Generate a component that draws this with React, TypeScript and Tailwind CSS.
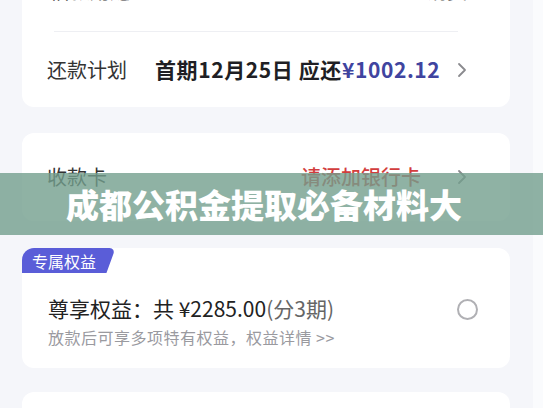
import React from 'react';

const font = { fontFamily: '"Noto Sans CJK SC", "Noto Sans", sans-serif' };

function Chevron() {
  return (
    <svg width="10" height="16" viewBox="0 0 10 16" className="shrink-0">
      <path d="M2 2l6 6-6 6" fill="none" stroke="#8a8a8e" strokeWidth="1.8" strokeLinecap="round" strokeLinejoin="round" />
    </svg>
  );
}

export default function App() {
  return (
    <div style={font} className="relative flex w-[543px] h-[408px] overflow-hidden bg-[#f5f6fa]">
      <div className="w-[533px] pl-[22px] pr-[23px]">
        {/* loan card */}
        <div className="mt-[-50px] bg-white rounded-[12px]">
          <div className="h-[81px] flex items-center pl-[28px] pr-[43px] text-[20px] text-[#333]">
            <span>借款用途</span>
            <span className="ml-auto text-[#555]">个人消费</span>
          </div>
          <div className="mx-[32px] mr-[52px] h-px bg-[#eeeff3]" />
          <div className="h-[75px] flex items-center pl-[25px] pr-[43px]">
            <span className="w-[108px] text-[20px] text-[#333]">还款计划</span>
            <span className="text-[21px] font-bold text-[#1f1f24] tracking-[0.6px]">
              首期12月25日 应还<span className="text-[#40449f]">¥1002.12</span>
            </span>
            <span className="ml-auto">
              <Chevron />
            </span>
          </div>
        </div>

        {/* bank card */}
        <div className="mt-[26px] h-[88px] bg-white rounded-[12px] flex items-center pl-[25px] pr-[43px]">
          <span className="text-[20px] text-[#333]">收款卡</span>
          <span className="ml-auto text-[20px] font-medium text-[#d23d3d]">请添加银行卡</span>
          <span className="ml-[36px]">
            <Chevron />
          </span>
        </div>

        {/* benefits card */}
        <div className="mt-[27px] bg-white rounded-[12px] pb-[20px]">
          <div className="relative inline-flex items-center h-[25px] pl-[10px] pr-[6px] bg-[#5a5dd8] rounded-tl-[12px] text-[16px] text-white leading-none">
            <span className="relative z-10">专属权益</span>
            <span className="absolute right-[-9px] top-0 h-full w-[18px] bg-[#5a5dd8] -skew-x-[20deg] rounded-tr-[6px]" />
          </div>
          <div className="flex items-center pl-[26px] pr-[32px] pt-[21px]">
            <div className="flex flex-col">
              <span className="text-[21px] leading-[28px] text-[#222]">
                尊享权益：共 ¥2285.00<span className="text-[#666]">(分3期)</span>
              </span>
              <span className="mt-[4px] text-[16px] leading-[22px] tracking-[0.5px] text-[#9a9a9f]">放款后可享多项特有权益，权益详情 &gt;&gt;</span>
            </div>
            <span className="ml-auto mb-[24px] w-[21px] h-[21px] rounded-full border-2 border-[#b0b0b4]" />
          </div>
        </div>

        <div className="mt-[24px] h-[60px] bg-white rounded-[12px]" />
      </div>
      <div className="flex-1 bg-[#fafbfd]" />

      {/* overlay banner */}
      <div className="absolute left-0 right-0 top-[173px] h-[62px] bg-[#739f8d]/80 flex items-center pl-[66px]">
        <span className="text-[33px] font-black text-white leading-none">成都公积金提取必备材料大</span>
      </div>
    </div>
  );
}
